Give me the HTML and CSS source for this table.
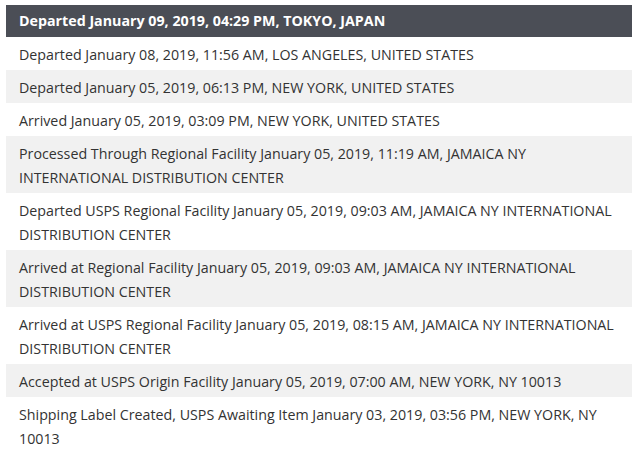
FILE: index.html
```html
<!DOCTYPE HTML>
<html lang="en-US">
<head>
	<meta charset="UTF-8" />
	<title>Tracking history</title>
	<link rel="stylesheet" href="styles.css">
</head>
<body>

	<ul class="history">
		<li class="current">Departed January 09, 2019, 04:29 PM, TOKYO, JAPAN</li>
		<li>Departed January 08, 2019, 11:56 AM, LOS ANGELES, UNITED STATES</li>
		<li>Departed January 05, 2019, 06:13 PM, NEW YORK, UNITED STATES</li>
		<li>Arrived January 05, 2019, 03:09 PM, NEW YORK, UNITED STATES</li>
		<li>Processed Through Regional Facility January 05, 2019, 11:19 AM, JAMAICA NY INTERNATIONAL DISTRIBUTION CENTER</li>
		<li>Departed USPS Regional Facility January 05, 2019, 09:03 AM, JAMAICA NY INTERNATIONAL DISTRIBUTION CENTER</li>
		<li>Arrived at Regional Facility January 05, 2019, 09:03 AM, JAMAICA NY INTERNATIONAL DISTRIBUTION CENTER</li>
		<li>Arrived at USPS Regional Facility January 05, 2019, 08:15 AM, JAMAICA NY INTERNATIONAL DISTRIBUTION CENTER</li>
		<li>Accepted at USPS Origin Facility January 05, 2019, 07:00 AM, NEW YORK, NY 10013</li>
		<li>Shipping Label Created, USPS Awaiting Item January 03, 2019, 03:56 PM, NEW YORK, NY 10013</li>
	</ul>

</body>
</html>
```

FILE: styles.css
```css
* {
	margin: 0;
	padding: 0;
}
body {
	background-color: #fff;
	font-family: "Open Sans", "Liberation Sans", sans-serif;
	font-size: 14.25px;
	color: #333;
}
.history {
	list-style: none;
	margin: 5px 8px 0 6px;
}
.history li {
	line-height: 24px;
	padding: 5.5px 13px 3.5px;
}
.history li:nth-child(odd) {
	background-color: #f1f1f1;
}
.history li.current {
	background-color: #4b4e56;
	color: #fff;
	font-weight: bold;
	padding-top: 4px;
	padding-bottom: 4px;
}
```
